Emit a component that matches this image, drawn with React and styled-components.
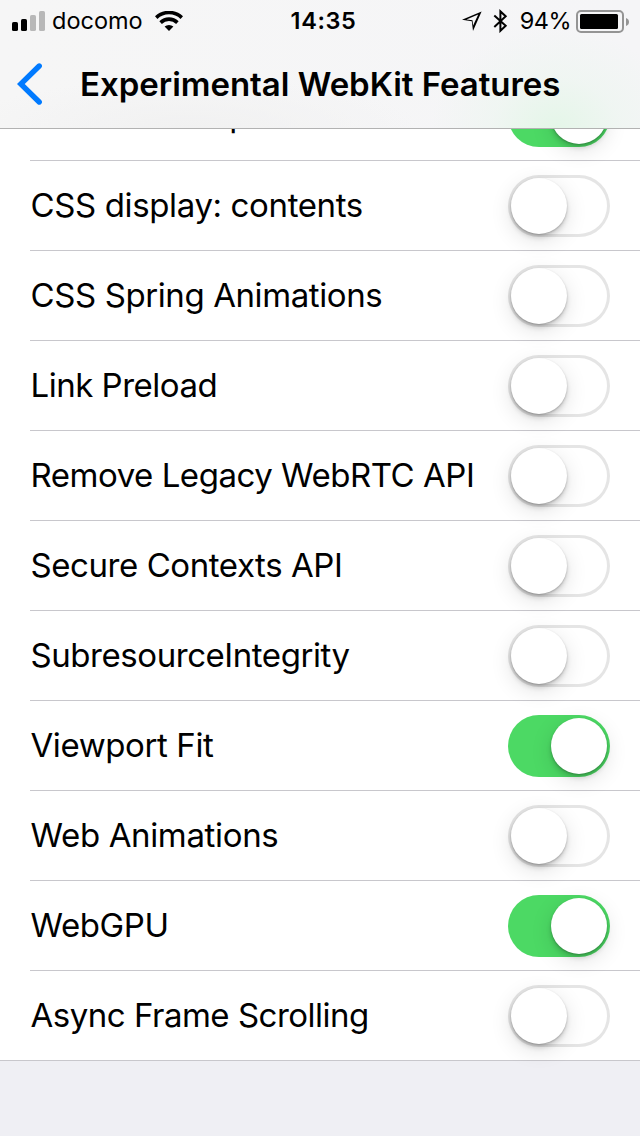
import React from "react";
import styled, { createGlobalStyle } from "styled-components";

const Global = createGlobalStyle`
  * { box-sizing: border-box; }
  body { margin: 0; background: #efeff4; }
`;

const Screen = styled.div`
  width: 640px;
  height: 1136px;
  overflow: hidden;
  display: flex;
  flex-direction: column;
  background: #efeff4;
  color: #000;
  font-family: Inter, "Liberation Sans", sans-serif;
`;

const Header = styled.header`
  flex: none;
  height: 129px;
  border-bottom: 1px solid #b2b2b2;
  background:
    radial-gradient(ellipse 125px 100px at 556px 128px, #e4f6e8 0%, rgba(236, 246, 239, 0.6) 50%, rgba(245, 245, 247, 0) 100%),
    radial-gradient(ellipse 230px 50px at 190px 128px, #f1f1f1 0%, rgba(245, 245, 246, 0) 100%),
    linear-gradient(90deg, #f6f6f6, #f5f5f7);
`;

const StatusBar = styled.div`
  display: grid;
  grid-template-columns: 1fr auto 1fr;
  align-items: center;
  height: 40px;
  padding: 0 11px 0 12px;
`;

const StatusGroup = styled.div`
  display: flex;
  align-items: center;
  height: 40px;
  justify-content: ${(p) => (p.$end ? "flex-end" : "flex-start")};
  svg { display: block; flex: none; }
`;

const StatusText = styled.span`
  padding-top: 1px;
  font-size: 23.5px;
  line-height: 40px;
  white-space: nowrap;
  font-weight: ${(p) => p.$weight || 400};
  letter-spacing: ${(p) => p.$spacing || 0}px;
  margin: 0 ${(p) => p.$after || 0}px 0 ${(p) => p.$before || 0}px;
`;

const Clock = styled(StatusText)`
  padding-left: 6px;
`;

const StatusIcons = styled.div`
  display: flex;
  align-items: center;
  gap: 11px;
`;

const NavBar = styled.div`
  display: flex;
  align-items: center;
  height: 88px;
  padding-left: 17px;
`;

const BackButton = styled.button`
  display: flex;
  width: 63px;
  height: 88px;
  padding: 0;
  border: 0;
  background: none;
  align-items: center;
`;

const Title = styled.h1`
  margin: 0;
  font-size: 33px;
  line-height: 88px;
  font-weight: 600;
  white-space: nowrap;
  letter-spacing: -0.03px;
`;

const Scroller = styled.main`
  flex: 1;
  min-height: 0;
  overflow: hidden;
`;

const List = styled.ul`
  margin: -58px 0 0;
  padding: 0;
  list-style: none;
  background: #fff;
  border-bottom: 1px solid #c8c7cc;
`;

const Row = styled.li`
  display: flex;
  align-items: center;
  justify-content: space-between;
  height: 90px;
  margin-left: 30px;
  padding: 1px 30px 0 0.5px;
  border-bottom: 1px solid #c8c7cc;
  &:last-child { height: 89px; border-bottom: 0; }
`;

const Label = styled.span`
  padding-bottom: 2px;
  font-size: 33px;
  line-height: 86px;
  white-space: nowrap;
  letter-spacing: ${(p) => p.$spacing}px;
`;

const Switch = styled.span`
  display: flex;
  flex: none;
  width: 102px;
  height: 62px;
  padding: 3px;
  border-radius: 31px;
  justify-content: ${(p) => (p.$on ? "flex-end" : "flex-start")};
  background: ${(p) => (p.$on ? "#4cd964" : "#fff")};
  box-shadow: ${(p) => (p.$on ? "none" : "inset 0 0 0 3px #e5e5e5")};
`;

const Knob = styled.span`
  width: 56px;
  height: 56px;
  border-radius: 50%;
  background: #fff;
  box-shadow: 0 1px 2px rgba(0, 0, 0, 0.22), 0 4px 5px rgba(0, 0, 0, 0.14), 0 6px 22px rgba(0, 0, 0, 0.12);
`;

const features = [
  { name: "Constant Properties", on: true, spacing: -0.33 },
  { name: "CSS display: contents", spacing: -0.37 },
  { name: "CSS Spring Animations", spacing: -0.4 },
  { name: "Link Preload", spacing: -0.49 },
  { name: "Remove Legacy WebRTC API", spacing: -0.47 },
  { name: "Secure Contexts API", spacing: -0.43 },
  { name: "SubresourceIntegrity", spacing: -0.44 },
  { name: "Viewport Fit", on: true, spacing: -0.4 },
  { name: "Web Animations", spacing: -0.35 },
  { name: "WebGPU", on: true, spacing: -0.4 },
  { name: "Async Frame Scrolling", spacing: -0.49 },
];

const Signal = () => (
  <svg width="33" height="20" viewBox="0 0 33 20">
    <rect x="0" y="11" width="6" height="9" rx="1.6" />
    <rect x="9" y="8" width="6" height="12" rx="1.6" />
    <rect x="18" y="4" width="6" height="16" rx="1.6" fill="#b8b8b8" />
    <rect x="27" y="0" width="6" height="20" rx="1.6" fill="#b8b8b8" />
  </svg>
);

const Wifi = () => (
  <svg width="28" height="20" viewBox="0 0 28 20">
    <g fill="none" stroke="#000" strokeWidth="3.6">
      <path d="M1.2 6.6a18.6 18.6 0 0 1 25.6 0" />
      <path d="M5.6 11.6a12 12 0 0 1 16.8 0" />
    </g>
    <path d="M9.6 15.6a6.5 6.5 0 0 1 8.8 0L14 20z" />
  </svg>
);

const Location = () => (
  <svg width="20" height="20" viewBox="0 0 20 20">
    <path fillRule="evenodd" d="M19.6.4 0 8.8l9.8 1.5L11 20zM16.2 3.6l-5.1 11-.6-5.3-6-.9z" />
  </svg>
);

const Bluetooth = () => (
  <svg width="15" height="24" viewBox="0 0 15 24">
    <path d="M1.3 6.4 12.7 16.8 7.4 21.8V2.4l5.3 4.9L1.3 17.9" fill="none" stroke="#000" strokeWidth="2" />
  </svg>
);

const Battery = () => (
  <svg width="53" height="24" viewBox="0 0 53 24">
    <rect x="1" y="2" width="46" height="21" rx="4" fill="none" stroke="#949494" strokeWidth="2" />
    <rect x="4" y="5" width="38" height="15" rx="1.5" />
    <path d="M50 9c4 1.3 4 6.7 0 8z" fill="#949494" />
  </svg>
);

export default function App() {
  return (
    <Screen>
      <Global />
      <Header>
        <StatusBar>
          <StatusGroup>
            <Signal />
            <StatusText $before={7} $after={12}>docomo</StatusText>
            <Wifi />
          </StatusGroup>
          <Clock $weight={600} $spacing={0.6}>14:35</Clock>
          <StatusGroup $end>
            <StatusIcons>
              <Location />
              <Bluetooth />
            </StatusIcons>
            <StatusText $before={11.5} $after={5} $spacing={-0.5}>94%</StatusText>
            <Battery />
          </StatusGroup>
        </StatusBar>
        <NavBar>
          <BackButton aria-label="Back">
            <svg width="26" height="42" viewBox="0 0 26 42">
              <path d="M22.2 3 3.8 21l18.4 18" fill="none" stroke="#007aff" strokeWidth="5.4" strokeLinecap="round" />
            </svg>
          </BackButton>
          <Title>Experimental WebKit Features</Title>
        </NavBar>
      </Header>
      <Scroller>
        <List>
          {features.map((f) => (
            <Row key={f.name}>
              <Label $spacing={f.spacing}>{f.name}</Label>
              <Switch role="switch" aria-checked={!!f.on} aria-label={f.name} $on={f.on}>
                <Knob />
              </Switch>
            </Row>
          ))}
        </List>
      </Scroller>
    </Screen>
  );
}
